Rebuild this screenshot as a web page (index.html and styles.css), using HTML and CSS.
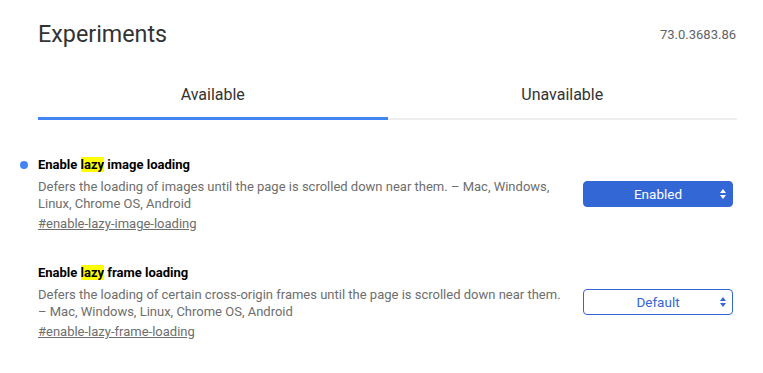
FILE: index.html
```html
<!DOCTYPE html>
<html lang="en">
<head>
    <meta charset="UTF-8">
    <meta name="viewport" content="width=device-width, initial-scale=1.0">
    <title>Experiments</title>
    <link rel="stylesheet" href="styles.css">
</head>
<body>
    <div class="page">
        <div class="header">
            <h1 class="title">Experiments</h1>
            <div class="version">73.0.3683.86</div>
        </div>

        <div class="tabs">
            <div class="tab active">Available</div>
            <div class="tab">Unavailable</div>
        </div>

        <div class="experiments">
            <div class="experiment">
                <span class="dot"></span>
                <div class="info">
                    <div class="name">Enable <mark>lazy</mark> image loading</div>
                    <div class="desc">Defers the loading of images until the page is scrolled down near them. – Mac, Windows, Linux, Chrome OS, Android</div>
                    <a class="link" href="#enable-lazy-image-loading">#enable-lazy-image-loading</a>
                </div>
                <div class="select enabled">
                    <span>Enabled</span>
                    <svg class="arrows" width="6" height="10" viewBox="0 0 6 10"><path d="M3 0L6 4H0z M3 10L6 6H0z" fill="currentColor"/></svg>
                </div>
            </div>

            <div class="experiment">
                <div class="info">
                    <div class="name">Enable <mark>lazy</mark> frame loading</div>
                    <div class="desc">Defers the loading of certain cross-origin frames until the page is scrolled down near them. – Mac, Windows, Linux, Chrome OS, Android</div>
                    <a class="link" href="#enable-lazy-frame-loading">#enable-lazy-frame-loading</a>
                </div>
                <div class="select">
                    <span>Default</span>
                    <svg class="arrows" width="6" height="10" viewBox="0 0 6 10"><path d="M3 0L6 4H0z M3 10L6 6H0z" fill="currentColor"/></svg>
                </div>
            </div>
        </div>
    </div>
</body>
</html>
```

FILE: styles.css
```css
body {
    font-family: Roboto, "Liberation Sans", sans-serif;
    margin: 0;
    padding: 0;
    background-color: #fff;
    color: #202124;
}
.page {
    width: 699px;
    margin-left: 38px;
}
.header {
    display: flex;
    justify-content: space-between;
    align-items: center;
    padding-top: 19px;
    height: 30px;
}
.title {
    margin: 0;
    font-size: 23.3px;
    font-weight: normal;
    color: #333;
}
.version {
    font-size: 13px;
    color: #5f6368;
    margin-right: 1px;
}
.tabs {
    display: flex;
    margin-top: 31px;
}
.tab {
    flex: 1;
    text-align: center;
    font-size: 16px;
    color: #333;
    height: 30px;
    line-height: 30px;
    border-bottom: 2px solid #eee;
    padding-bottom: 8px;
}
.tab.active {
    border-bottom: 3px solid #4285f4;
    padding-bottom: 7px;
}
.experiments {
    padding-top: 36px;
}
.experiment {
    position: relative;
    display: flex;
    align-items: center;
    justify-content: space-between;
    margin-bottom: 32px;
}
.dot {
    position: absolute;
    left: -18px;
    top: 5px;
    width: 8px;
    height: 8px;
    border-radius: 50%;
    background-color: #4285f4;
}
.info {
    width: 527px;
    font-size: 13px;
    line-height: 17px;
}
.name {
    font-weight: bold;
    color: #000;
    margin-bottom: 5px;
}
mark {
    background-color: #ffff00;
    color: #000;
}
.desc {
    color: #6e6e6e;
    margin-bottom: 3px;
}
.link {
    color: #6e6e6e;
}
.select {
    box-sizing: border-box;
    width: 150px;
    height: 26px;
    margin-right: 4px;
    border: 1px solid #3367d6;
    border-radius: 4px;
    color: #3367d6;
    font-size: 13.5px;
    display: flex;
    align-items: center;
    justify-content: center;
    position: relative;
}
.select.enabled {
    background-color: #3367d6;
    color: #fff;
}
.arrows {
    position: absolute;
    right: 6px;
    top: 7px;
}
```
